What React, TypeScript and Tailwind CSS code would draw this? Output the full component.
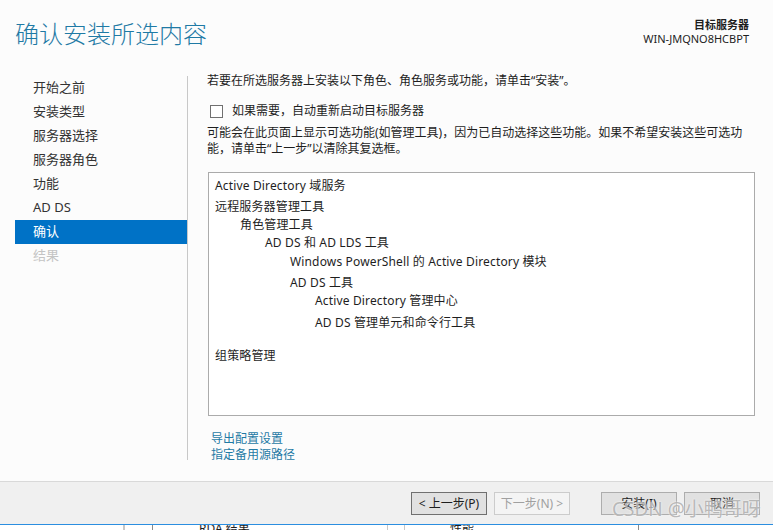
import React from "react";

const navItems = ["开始之前", "安装类型", "服务器选择", "服务器角色", "功能", "AD DS", "确认", "结果"];

type TreeRow = { text: string; level: number; mt: string };

const treeRows: TreeRow[] = [
  { text: "Active Directory 域服务", level: 0, mt: "mt-0" },
  { text: "远程服务器管理工具", level: 0, mt: "mt-[3px]" },
  { text: "角色管理工具", level: 1, mt: "mt-0" },
  { text: "AD DS 和 AD LDS 工具", level: 2, mt: "mt-0" },
  { text: "Windows PowerShell 的 Active Directory 模块", level: 3, mt: "mt-[1px]" },
  { text: "AD DS 工具", level: 3, mt: "mt-[3px]" },
  { text: "Active Directory 管理中心", level: 4, mt: "mt-0" },
  { text: "AD DS 管理单元和命令行工具", level: 4, mt: "mt-[4px]" },
  { text: "组策略管理", level: 0, mt: "mt-[15px]" },
];

const indent = ["pl-0", "pl-[25px]", "pl-[50px]", "pl-[75px]", "pl-[100px]"];

function Button({ label, disabled, strong }: { label: string; disabled?: boolean; strong?: boolean }) {
  return (
    <div
      className={`w-[76px] h-[23px] flex items-center justify-center text-[12px] border ${
        disabled
          ? "border-[#cccccc] bg-[#f4f4f4] text-[#a0a0a0]"
          : strong
          ? "border-[#707070] bg-[#e1e1e1] text-[#1e1e1e]"
          : "border-[#adadad] bg-[#e1e1e1] text-[#1e1e1e]"
      }`}
    >
      {label}
    </div>
  );
}

export default function App() {
  return (
    <div className="relative w-[773px] h-[530px] overflow-hidden bg-[#fcfcfc] flex flex-col font-['Noto_Sans','Noto_Sans_CJK_SC',sans-serif] text-[#1e1e1e]">
      {/* header */}
      <div className="h-[76px] shrink-0 flex justify-between pl-[15px] pr-[24px]">
        <div className="pt-[17px] text-[24px] leading-[34px] font-light text-[#1f7aa5]">确认安装所选内容</div>
        <div className="pt-[18px] flex flex-col items-end text-[11px] leading-[14px]">
          <span className="font-bold">目标服务器</span>
          <span>WIN-JMQNO8HCBPT</span>
        </div>
      </div>

      {/* body */}
      <div className="flex-1 flex min-h-0">
        <div className="w-[188px] shrink-0 pl-[15px] pb-[21px] flex">
          <div className="flex-1 flex flex-col border-r border-[#c8c8c8]">
            {navItems.map((item, i) => (
              <div
                key={item}
                className={`h-[24px] pl-[18px] flex items-center text-[13px] ${
                  i === 6 ? "bg-[#0072c6] text-white" : i === 7 ? "text-[#c4c4c4]" : "text-[#333333]"
                }`}
              >
                {item}
              </div>
            ))}
          </div>
        </div>

        <div className="flex-1 flex flex-col pl-[19px] pr-[18px] text-[12px] leading-[16px]">
          <div className="-mt-[3px]">若要在所选服务器上安装以下角色、角色服务或功能，请单击“安装”。</div>
          <div className="mt-[14px] flex items-center h-[16px] pl-[3px]">
            <div className="w-[13px] h-[13px] border border-[#707070] bg-white" />
            <span className="ml-[9px]">如果需要，自动重新启动目标服务器</span>
          </div>
          <div className="mt-[6px]">
            可能会在此页面上显示可选功能(如管理工具)，因为已自动选择这些功能。如果不希望安装这些可选功
            <br />
            能，请单击“上一步”以清除其复选框。
          </div>
          <div className="mt-[15px] ml-[1px] h-[244px] border border-[#ababab] bg-white pl-[6px] pt-[4px] leading-[18px] tracking-[0.15px]">
            {treeRows.map((r) => (
              <div key={r.text} className={`${r.mt} ${indent[r.level]}`}>
                {r.text}
              </div>
            ))}
          </div>
          <div className="mt-[15px] pl-[4px] text-[#1f7aa5] leading-[16px]">
            <div>导出配置设置</div>
            <div>指定备用源路径</div>
          </div>
        </div>
      </div>

      {/* footer */}
      <div className="h-[43px] shrink-0 border-t border-[#d9d9d9] bg-[#f0f0f0] flex items-start pt-[10px] pl-[411px]">
        <Button label="< 上一步(P)" strong />
        <div className="ml-[7px]">
          <Button label="下一步(N) >" disabled />
        </div>
        <div className="ml-[31px]">
          <Button label="安装(I)" />
        </div>
        <div className="ml-[7px]">
          <Button label="取消" />
        </div>
      </div>

      {/* window behind */}
      <div className="h-[6px] shrink-0 border-t border-[#2b8ee0] bg-white flex text-[12px] leading-[16px] text-[#1e1e1e] overflow-hidden">
        <div className="w-[125px] border-r-[2px] border-[#c8c8c8]" />
        <div className="w-[28px] border-r border-[#8a8a8a]" />
        <div className="w-[235px] border-r border-[#c8c8c8] pl-[46px] -mt-[4px]">RDA 结果</div>
        <div className="w-[17px] border-r border-[#c8c8c8]" />
        <div className="w-[234px] border-r border-[#8a8a8a] pl-[45px] -mt-[4px]">性能</div>
        <div className="flex-1" />
      </div>

      {/* watermark */}
      <div className="absolute left-[612px] top-[497px] text-[19px] leading-[24px] text-[#a8a8a8]/80 [text-shadow:0_0_2px_#ffffff]">
        CSDN @小鸭哥呀
      </div>
    </div>
  );
}
